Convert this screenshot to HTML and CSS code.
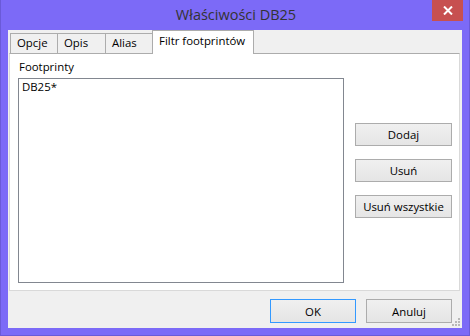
FILE: index.html
```html
<!DOCTYPE html>
<html lang="pl">
<head>
<meta charset="utf-8">
<title>Właściwości DB25</title>
<link rel="stylesheet" href="styles.css">
</head>
<body>
<div class="window">
  <div class="titlebar">
    <div class="title">Właściwości DB25</div>
    <div class="close"><svg width="10" height="9" viewBox="0 0 10 9"><path d="M1 0.5 L9 8.5 M9 0.5 L1 8.5" stroke="#fff" stroke-width="2" fill="none"/></svg></div>
  </div>
  <div class="client">
    <div class="tabs">
      <div class="tab t1">Opcje</div>
      <div class="tab t2">Opis</div>
      <div class="tab t3">Alias</div>
      <div class="tab active">Filtr footprintów</div>
    </div>
    <div class="panel">
      <div class="left">
        <div class="label">Footprinty</div>
        <div class="listbox"><div class="item">DB25*</div></div>
      </div>
      <div class="side">
        <div class="btn side-btn">Dodaj</div>
        <div class="btn side-btn">Usuń</div>
        <div class="btn side-btn">Usuń wszystkie</div>
      </div>
    </div>
    <div class="footer">
      <div class="btn foot-btn default">OK</div>
      <div class="btn foot-btn">Anuluj</div>
      <div class="grip">
        <svg width="8" height="8" viewBox="0 0 8 8" fill="#b8b8b8"><rect x="6" y="0" width="2" height="2"/><rect x="3" y="3" width="2" height="2"/><rect x="6" y="3" width="2" height="2"/><rect x="0" y="6" width="2" height="2"/><rect x="3" y="6" width="2" height="2"/><rect x="6" y="6" width="2" height="2"/></svg>
      </div>
    </div>
  </div>
</div>
</body>
</html>
```

FILE: styles.css
```css
* { box-sizing: border-box; }
html, body { margin: 0; padding: 0; }
body {
  width: 470px;
  height: 336px;
  overflow: hidden;
  font-family: "Open Sans", "Noto Sans", sans-serif;
  font-size: 11.4px;
  color: #000;
  background: #7c6af7;
}
.window {
  width: 470px;
  height: 336px;
  border: 1px solid #6a5ad8;
  border-top: none;
  display: flex;
  flex-direction: column;
}
.titlebar {
  height: 30px;
  display: flex;
  align-items: flex-start;
  justify-content: center;
  position: relative;
}
.title {
  font-size: 14.5px;
  color: #333;
  margin-top: 5px;
  margin-left: 2px;
}
.close {
  position: absolute;
  right: 6px;
  top: 0;
  width: 31px;
  height: 21px;
  background: #c75050;
  display: flex;
  align-items: center;
  justify-content: center;
}
.client {
  margin: 0 7px 7px 7px;
  height: 298px;
  background: #f0f0f0;
  display: flex;
  flex-direction: column;
}
.tabs {
  height: 23px;
  display: flex;
  align-items: flex-end;
  padding-left: 2px;
}
.tab {
  height: 20px;
  border: 1px solid #acacac;
  border-bottom: none;
  background: #f0f0f0;
  margin-right: -1px;
  padding: 0 0 0 6px;
  line-height: 18px;
}
.t1 { width: 48px; }
.t2 { width: 49px; }
.t3 { width: 48px; }
.tab.active {
  height: 24px;
  width: 102px;
  background: #fff;
  margin-bottom: -1px;
  position: relative;
  z-index: 1;
  padding-left: 6px;
  line-height: 19px;
}
.panel {
  margin: 0 2px 0 1px;
  height: 238px;
  background: #fff;
  border: 1px solid #d9d9d9;
  border-top-color: #acacac;
  display: flex;
}
.left {
  padding: 5px 0 0 8px;
  display: flex;
  flex-direction: column;
}
.label {
  height: 19px;
  line-height: 15px;
  padding-left: 1px;
}
.listbox {
  width: 326px;
  height: 205px;
  border: 1px solid #828790;
  background: #fff;
  padding: 0 0 0 3px;
}
.item { line-height: 15px; }
.side {
  padding: 69px 0 0 11px;
  display: flex;
  flex-direction: column;
  gap: 13px;
}
.btn {
  border: 1px solid #acacac;
  background: linear-gradient(#f0f0f0, #e5e5e5);
  display: flex;
  align-items: center;
  justify-content: center;
}
.side-btn {
  width: 97px;
  height: 23px;
}
.footer {
  flex: 1;
  display: flex;
  align-items: flex-start;
  padding: 8px 0 0 262px;
  gap: 10px;
  position: relative;
}
.foot-btn {
  width: 86px;
  height: 24px;
}
.default { border-color: #3399ff; }
.grip {
  position: absolute;
  right: 2px;
  bottom: 2px;
  width: 8px;
  height: 8px;
  display: flex;
}
```
